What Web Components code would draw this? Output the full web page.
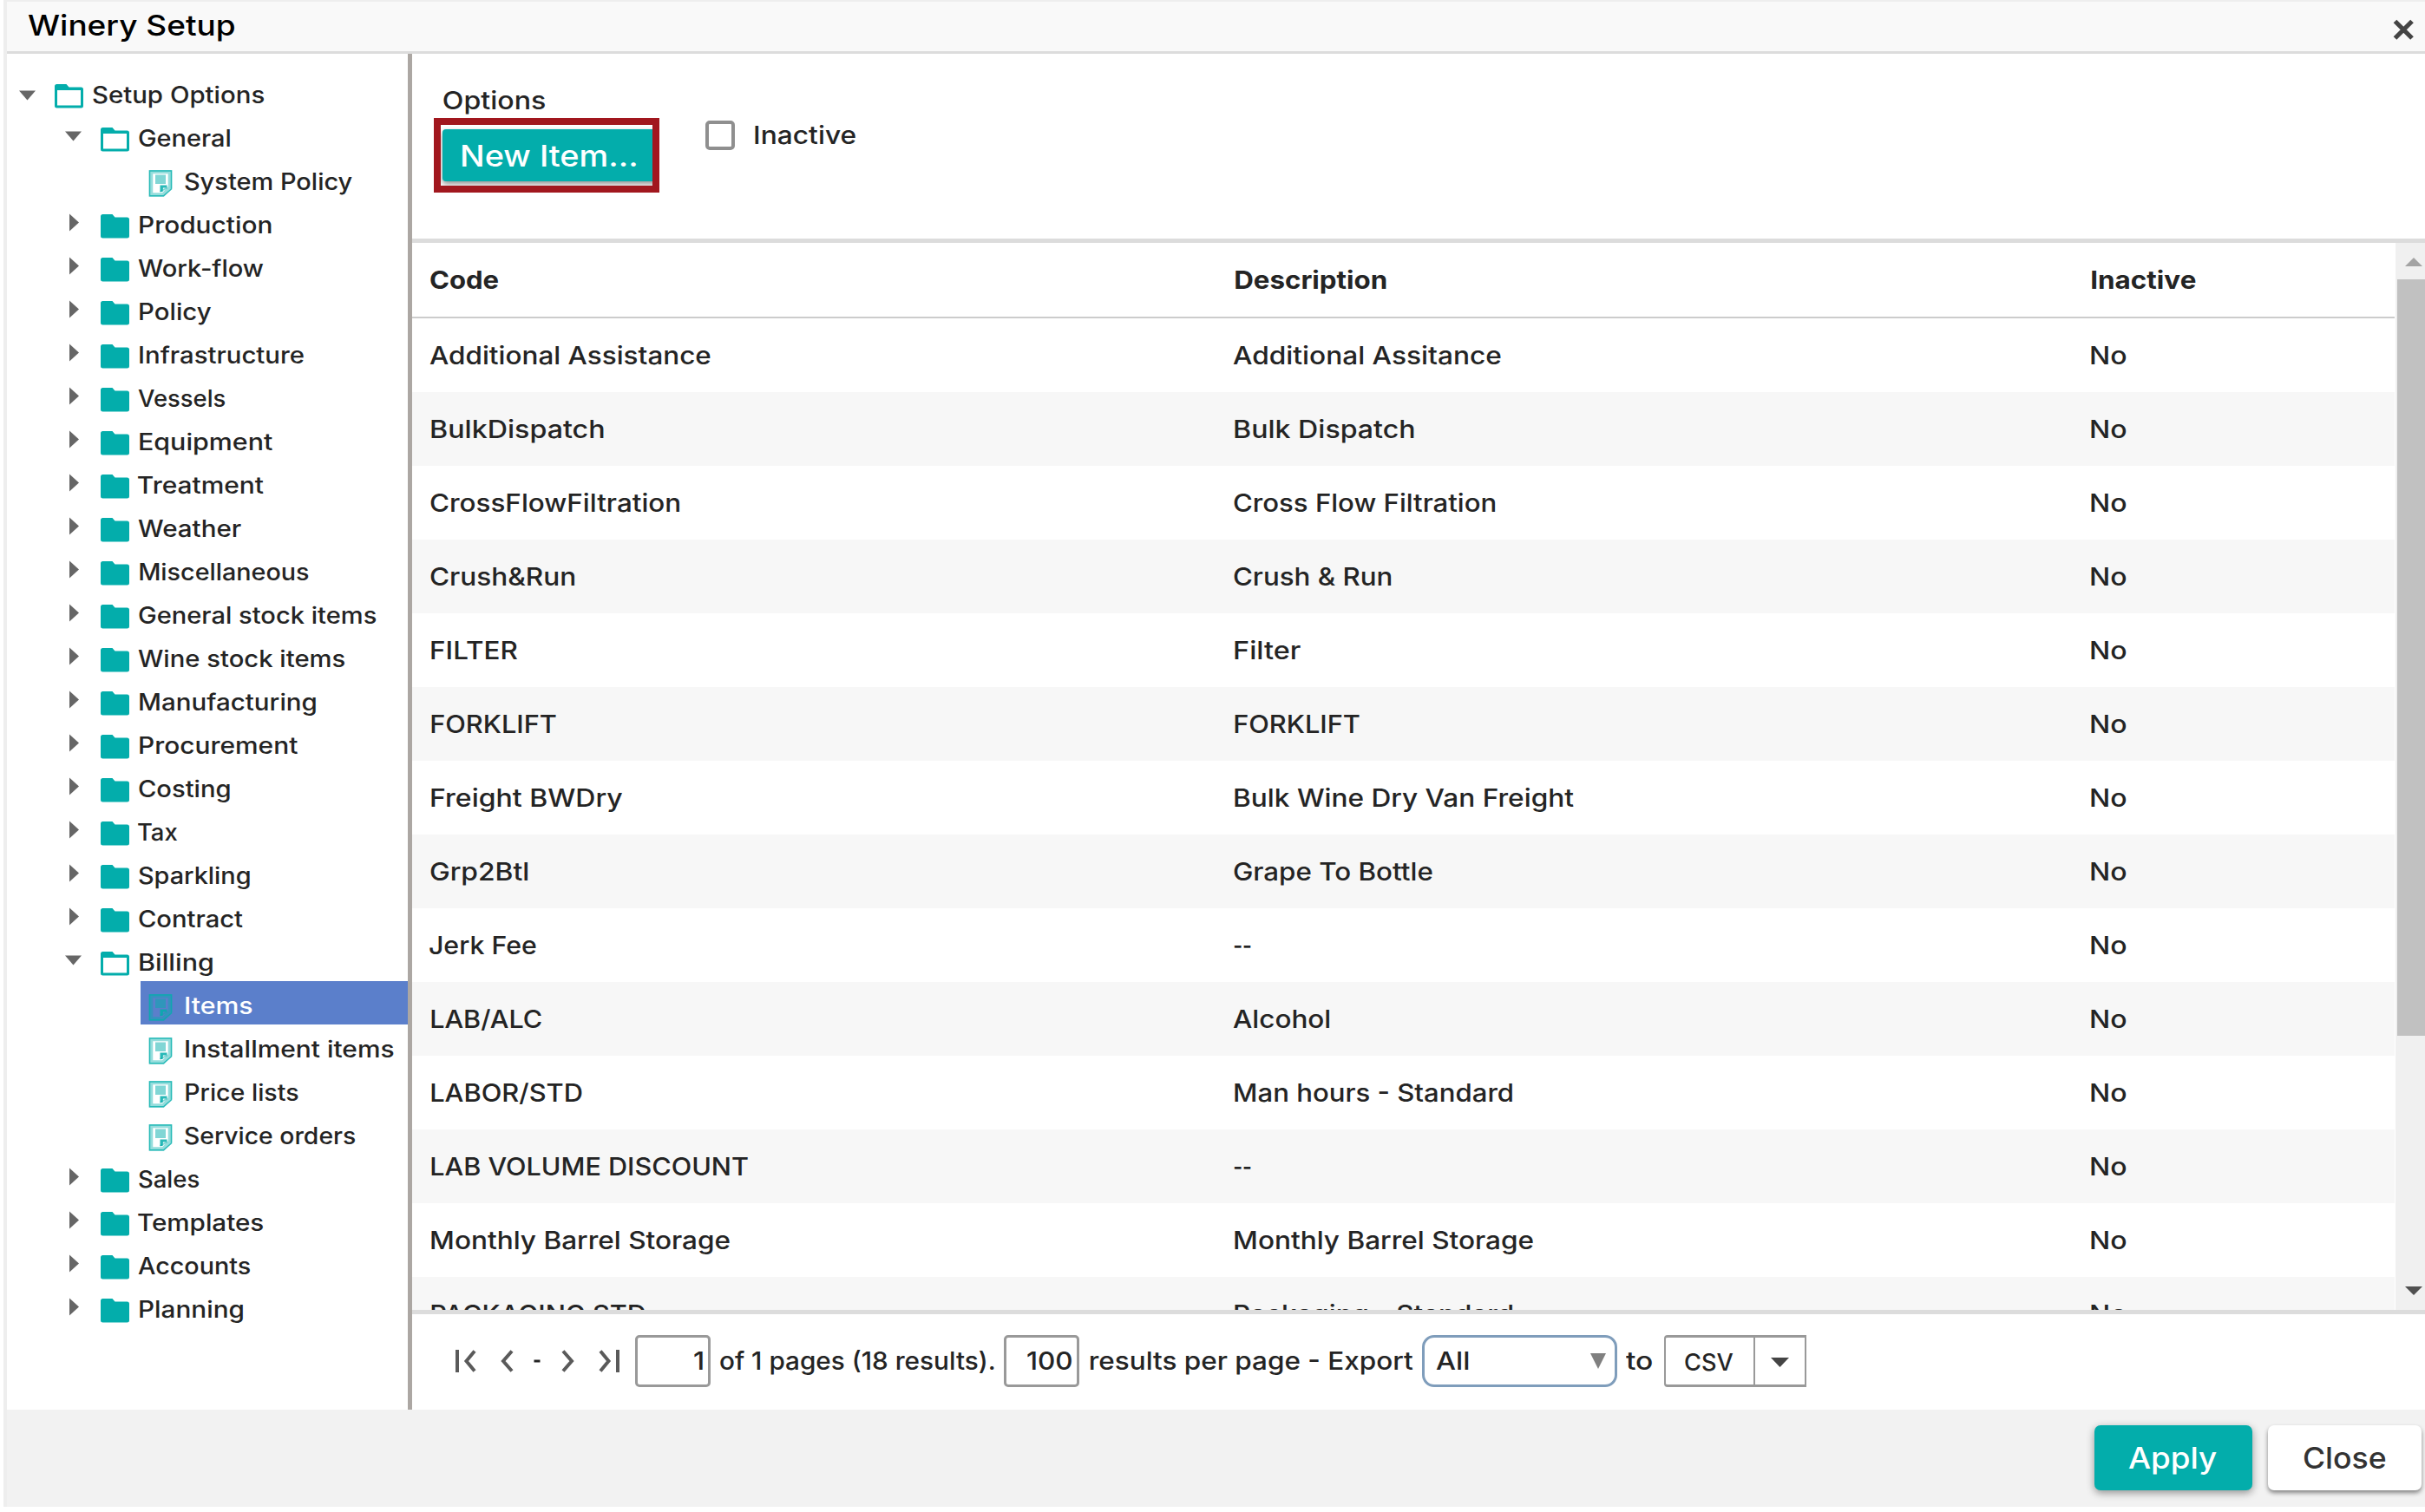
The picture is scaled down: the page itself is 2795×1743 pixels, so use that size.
<!DOCTYPE html>
<html lang="en">
<head>
<meta charset="utf-8">
<title>Winery Setup</title>
<style>
html,body{margin:0;height:100%;background:#fff;overflow:hidden}
body{font-family:Inter,"Open Sans",sans-serif;color:#242424;font-size:28.5px;font-weight:500}
</style>
</head>
<body>
<winery-setup></winery-setup>
<script>
const define = (name, html, setup) => {
  const t = document.createElement('template');
  t.innerHTML = html;
  customElements.define(name, class extends HTMLElement {
    constructor() {
      super();
      this.attachShadow({mode: 'open'}).append(t.content.cloneNode(true));
    }
    connectedCallback() { if (setup) setup(this, this.shadowRoot); }
  });
};

const ctx = document.createElement('canvas').getContext('2d');
define('fit-text', `<style>
  :host{display:block;flex:none;white-space:nowrap}
  span{display:inline-block;transform-origin:0 0;vertical-align:top}
</style><span></span>`, (el, root) => {
  const s = root.querySelector('span');
  const text = el.getAttribute('text');
  const w = +el.getAttribute('w');
  s.textContent = text;
  el.style.width = w + 'px';
  const cs = getComputedStyle(el);
  ctx.font = `${cs.fontWeight} ${cs.fontSize} ${cs.fontFamily}`;
  const m = ctx.measureText(text);
  const k = w / (m.actualBoundingBoxLeft + m.actualBoundingBoxRight);
  const bearing = /^[BDEFHIKLMNPR]/.test(text) ? 1.3 : /^[AJTVW]/.test(text) ? -1 : 0;
  s.style.transform = `translateX(${bearing}px) scaleX(${k}) translateX(${m.actualBoundingBoxLeft}px)`;
});

define('title-bar', `<style>
  :host{display:flex;justify-content:space-between;box-sizing:border-box;height:62px;border-top:2px solid #eee;border-bottom:3px solid #dcdcdc;background:#f9f9f9;padding:0 10px 0 25px;color:#000;font-size:33px;line-height:54px}
  svg{margin-top:18px;display:block}
</style>
<fit-text text="Winery Setup" w="238"></fit-text>
<svg width="29" height="29" viewBox="0 0 29 29"><path d="M4.5 4.5 24 24M24 4.5 4.5 24" stroke="#444" stroke-width="5.2"/></svg>`);

const ICONS = {
  open: `<svg width="33" height="28" viewBox="0 0 33 28"><path d="M0 2.5Q0 0 2.5 0H13.5L16.5 3.5H30.5Q33 3.5 33 6V25Q33 27.5 30.5 27.5H2.5Q0 27.5 0 25ZM3 7V24.5H30V7Z" fill="#03adab" fill-rule="evenodd"/></svg>`,
  closed: `<svg width="33" height="28" viewBox="0 0 33 28"><path d="M0 2.5Q0 0 2.5 0H13.5L16.5 3.5H30.5Q33 3.5 33 6V25Q33 27.5 30.5 27.5H2.5Q0 27.5 0 25Z" fill="#03adab"/></svg>`,
  page: `<svg width="33" height="31" viewBox="0 0 33 31" style="margin-top:-1.500px"><g fill="none" stroke="#03adab"><path d="M5 2H27V20L19 28.500H5Z" stroke-width="4.500" opacity=".42"/><path d="M3.500 1H28.500V22L19.500 29.700H3.500Z" stroke-width="1.500" opacity=".75"/></g><path d="M10 5.500H22V16H10Z" fill="#03adab" opacity=".5"/><path d="M15.500 17.500H23.500V20.500H19L18.500 25H15.500Z" fill="#03adab" opacity=".85"/><path d="M15.500 25 23.500 20.500" stroke="#03adab" stroke-width="1.500" opacity=".5"/></svg>`
};
define('tree-item', `<style>
  :host{display:flex;height:50px;line-height:50px;font-size:26.500px;font-weight:450;color:#242424}
  .toggle{width:48px;flex:none}
  .toggle svg{display:block}
  .label{display:flex;flex:1;padding-left:7px}
  .icon{width:33px;flex:none;padding-top:16px}
  .icon svg{display:block}
  fit-text{margin:3px 0 0 11px}
  :host([selected]) .label{background:#5b7fcb;color:#fff}
</style>
<div class="toggle"></div><div class="label"><div class="icon"></div></div>`, (el, root) => {
  const kind = el.getAttribute('kind'), level = +el.getAttribute('level');
  el.style.marginLeft = level * 53 + 'px';
  const tg = root.querySelector('.toggle');
  if (kind === 'open') {
    tg.innerHTML = `<svg width="48" height="50"><path d="M14 0H33L23.500 11Z" fill="#666" transform="translate(0 ${level ? 20.5 : 23.5})"/></svg>`;
  } else if (kind === 'closed') {
    tg.innerHTML = '<svg width="48" height="50"><path d="M19 15.500 30 25.500 19 35.500Z" fill="#666"/></svg>';
  }
  root.querySelector('.icon').innerHTML = ICONS[kind];
  const f = document.createElement('fit-text');
  f.setAttribute('text', el.getAttribute('text'));
  f.setAttribute('w', el.getAttribute('w'));
  root.querySelector('.label').append(f);
});

const TREE = [
  ['Setup Options',0,'open',198],['General',1,'open',105],['System Policy',2,'page',193],
  ['Production',1,'closed',152],['Work-flow',1,'closed',145],['Policy',1,'closed',82],
  ['Infrastructure',1,'closed',189],['Vessels',1,'closed',101],['Equipment',1,'closed',153],
  ['Treatment',1,'closed',145],['Weather',1,'closed',119],['Miscellaneous',1,'closed',195],
  ['General stock items',1,'closed',274],['Wine stock items',1,'closed',239],
  ['Manufacturing',1,'closed',203],['Procurement',1,'closed',182],['Costing',1,'closed',105],
  ['Tax',1,'closed',46],['Sparkling',1,'closed',128],['Contract',1,'closed',120],
  ['Billing',1,'open',84],['Items',2,'page',77],['Installment items',2,'page',240],
  ['Price lists',2,'page',130],['Service orders',2,'page',197],['Sales',1,'closed',70],
  ['Templates',1,'closed',145],['Accounts',1,'closed',130],['Planning',1,'closed',119]
];
define('setup-tree', `<style>
  :host{display:block;box-sizing:border-box;width:467px;flex:none;padding-top:19px;border-right:5px solid #aca7a3}
</style>`, (el, root) => {
  for (const [text, level, kind, w] of TREE) {
    const i = document.createElement('tree-item');
    i.setAttribute('text', text); i.setAttribute('level', level);
    i.setAttribute('kind', kind); i.setAttribute('w', w);
    if (text === 'Items') i.setAttribute('selected', '');
    root.append(i);
  }
});

define('options-bar', `<style>
  :host{display:flex;box-sizing:border-box;height:218px;border-bottom:5px solid #dcdcdc;padding-left:25px}
  .group{width:260px}
  .group>fit-text{margin:34px 0 0 10.500px;line-height:40px}
  .mark{box-sizing:border-box;width:260px;height:86px;border:8px solid #a1171e;padding:5px 0 5px 2px;overflow:hidden}
  button{all:unset;display:block;box-sizing:border-box;width:250px;height:60px;padding-left:21px;border-radius:4px;background:#03adab;box-shadow:0 3px 6px rgba(0,0,0,.45);color:#fff;font-size:33.500px;font-weight:550;line-height:62px}
  .check{display:flex;gap:22px;margin:77px 0 0 53px;height:34px;line-height:34px}
  .box{box-sizing:border-box;width:34px;height:34px;border:4px solid #8f8f8f;border-radius:5px}
</style>
<div class="group"><fit-text text="Options" w="118"></fit-text>
<div class="mark"><button><fit-text text="New Item..." w="201"></fit-text></button></div></div>
<div class="check"><div class="box"></div><fit-text text="Inactive" w="116"></fit-text></div>`);

const ROWS = [
  ['Additional Assistance',324,'Additional Assitance',309],
  ['BulkDispatch',199,'Bulk Dispatch',207],
  ['CrossFlowFiltration',288,'Cross Flow Filtration',302],
  ['Crush&Run',167,'Crush & Run',182],
  ['FILTER',99,'Filter',76],
  ['FORKLIFT',144,'FORKLIFT',144],
  ['Freight BWDry',220,'Bulk Wine Dry Van Freight',391],
  ['Grp2Btl',113,'Grape To Bottle',229],
  ['Jerk Fee',123,'--',20],
  ['LAB/ALC',127,'Alcohol',112],
  ['LABOR/STD',173,'Man hours - Standard',320],
  ['LAB VOLUME DISCOUNT',365,'--',20],
  ['Monthly Barrel Storage',344,'Monthly Barrel Storage',344],
  ['PACKAGING STD',246,'Packaging - Standard',320]
];
define('grid-row', `<style>
  :host{display:grid;flex:none;grid-template-columns:926px 987px 1fr;height:85px;line-height:85px;padding-left:21px}
  :host([alt]){background:#f7f7f7}
  :host([head]){border-bottom:2px solid #ccc;font-weight:650}
</style>`, (el, root) => {
  JSON.parse(el.getAttribute('cells')).forEach(([t, w]) => {
    const f = document.createElement('fit-text');
    f.setAttribute('text', t); f.setAttribute('w', w);
    root.append(f);
  });
});
define('scroll-bar', `<style>
  :host{display:flex;flex-direction:column;flex:none;width:34px;background:#f0f0f0}
  svg{display:block;flex:none}
  .thumb{height:872px;margin-left:2px;background:#c1c1c1}
  .gap{flex:1}
</style>
<svg width="34" height="42"><path d="M11 27 21 17 31 27Z" fill="#a3a3a3"/></svg>
<div class="thumb"></div><div class="gap"></div>
<svg width="34" height="42"><path d="M11 15H31L21 25Z" fill="#505050"/></svg>`);
define('data-grid', `<style>
  :host{display:flex;box-sizing:border-box;height:1235px;border-bottom:5px solid #dcdcdc}
  .rows{display:flex;flex-direction:column;flex:1;overflow:hidden;margin-right:1px}
</style><div class="rows"></div><scroll-bar></scroll-bar>`, (el, root) => {
  const box = root.querySelector('.rows');
  const add = (cells, attr) => {
    const r = document.createElement('grid-row');
    r.setAttribute('cells', JSON.stringify(cells));
    if (attr) r.setAttribute(attr, '');
    box.append(r);
  };
  add([['Code',78],['Description',174],['Inactive',120]], 'head');
  ROWS.forEach(([a, aw, b, bw], i) => add([[a, aw],[b, bw],['No',40]], i % 2 ? 'alt' : ''));
});

define('pager-bar', `<style>
  :host{display:flex;box-sizing:border-box;height:110px;padding:24px 0 0 50px;line-height:60px}
  svg{display:block;flex:none}
  .nav{width:207px}
  .f{box-sizing:border-box;display:flex;justify-content:flex-end;flex:none;width:87px;height:60px;border:3px solid #999;border-radius:5px;padding-right:6px;line-height:54px}
  .select{box-sizing:border-box;display:flex;justify-content:space-between;flex:none;width:225px;height:60px;border:3px solid #7f9dbb;border-radius:14px;padding:0 10px 0 14px;line-height:54px}
  .combo{box-sizing:border-box;display:flex;flex:none;width:164px;height:60px;border:2px solid #999;border-width:3px 2px;border-radius:4px 0 0 4px;line-height:57px;font-size:26.500px;font-weight:450}
  .combo>div{box-sizing:border-box;width:103px;border-right:2px solid #999;padding-left:22px}
</style>
<svg class="nav" width="207" height="60" viewBox="0 0 207 60" fill="none" stroke="#5a5a5a" stroke-width="4"><path d="M2 17V43M22 18.500 12.500 30 22 41.500M65 18.500 55 30 65 41.500M124 18.500 134 30 124 41.500M167 18.500 176.500 30 167 41.500M187 17V43"/><path d="M90.500 30H97.500" stroke="#242424" stroke-width="3"/></svg>
<div class="f"><fit-text text="1" w="10"></fit-text></div>
<fit-text text="of 1 pages (18 results)." w="316" style="margin:0 11px"></fit-text>
<div class="f"><fit-text text="100" w="51"></fit-text></div>
<fit-text text="results per page - Export" w="372" style="margin:0 10px 0 13px"></fit-text>
<div class="select"><fit-text text="All" w="38"></fit-text><svg width="18" height="54"><path d="M0 18H18L9 36Z" fill="#808080"/></svg></div>
<fit-text text="to" w="30" style="margin:0 14px 0 10px"></fit-text>
<div class="combo"><div><fit-text text="CSV" w="56"></fit-text></div><svg width="57" height="54"><path d="M18 23H39L28.500 34Z" fill="#444"/></svg></div>`);

define('action-button', `<style>
  :host{display:flex;justify-content:center;box-sizing:border-box;flex:none;height:75px;border-radius:7px;background:#fff;color:#333;font-size:33.500px;line-height:76px;font-weight:450;box-shadow:0 3px 5px rgba(0,0,0,.45)}
  :host([primary]){background:#03adab;color:#fff;font-weight:550;box-shadow:0 3px 10px rgba(0,0,0,.4)}
</style><slot></slot>`);
define('dialog-footer', `<style>
  :host{display:flex;justify-content:flex-end;gap:18px;box-sizing:border-box;height:112px;padding:18px 4px 0 0;background:#f2f2f2}
</style>
<action-button primary style="width:182px"><fit-text text="Apply" w="102"></fit-text></action-button>
<action-button style="width:177px"><fit-text text="Close" w="95"></fit-text></action-button>`);

define('winery-setup', `<style>
  :host{display:block;box-sizing:border-box;height:1737px;margin-left:4px;border-left:4px solid #eee;background:#fff}
  .body{display:flex;height:1563px}
  main{flex:1;min-width:0}
</style>
<title-bar></title-bar>
<div class="body"><setup-tree></setup-tree>
<main><options-bar></options-bar><data-grid></data-grid><pager-bar></pager-bar></main></div>
<dialog-footer></dialog-footer>`);
</script>
</body>
</html>
